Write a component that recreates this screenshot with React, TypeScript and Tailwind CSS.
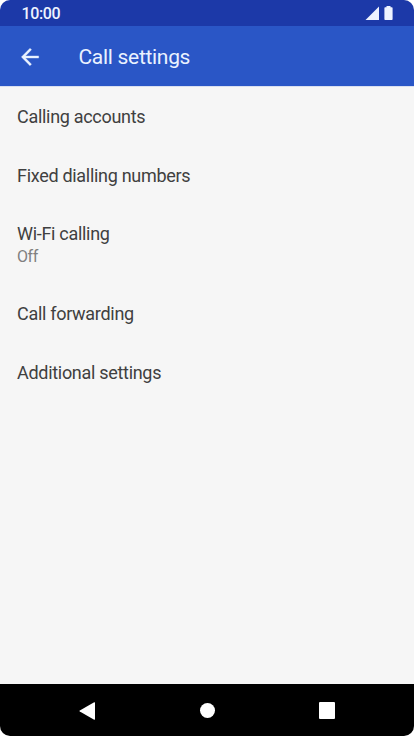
import React from 'react';

interface SettingItem {
  title: string;
  summary?: string;
}

const settings: SettingItem[] = [
  { title: 'Calling accounts' },
  { title: 'Fixed dialling numbers' },
  { title: 'Wi-Fi calling', summary: 'Off' },
  { title: 'Call forwarding' },
  { title: 'Additional settings' },
];

const StatusBar: React.FC = () => {
  return (
    <div className="h-[26px] shrink-0 bg-[#1c39a8] flex items-center justify-between pl-[21.5px] pr-[21.5px] text-[#eef3ff]">
      <span className="text-[16px] leading-[26px] font-medium tracking-[-0.35px] pt-px">10:00</span>
      <div className="flex items-center gap-[5px] pb-px">
        <svg width="14" height="14" viewBox="0 0 14 14" fill="currentColor">
          <path d="M14 .5v13.5H.5z" />
        </svg>
        <svg width="9" height="14" viewBox="0 0 9 14" fill="currentColor">
          <path d="M2.5 0h4v1.3h1.3q.8 0 .8.8v11.1q0 .8-.8.8H1.2q-.8 0-.8-.8V2.1q0-.8.8-.8h1.3z" />
        </svg>
      </div>
    </div>
  );
};

const AppBar: React.FC = () => {
  return (
    <header className="h-[60px] shrink-0 bg-[#2a56c6] flex items-center pl-[17px] text-[#eaf2ff]">
      <button className="w-[61.5px] pt-px" aria-label="Back">
        <svg className="block" width="26" height="26" viewBox="0 0 24 24" fill="currentColor" stroke="currentColor" strokeWidth="0.3">
          <path d="M20 11H7.83l5.59-5.59L12 4l-8 8 8 8 1.41-1.41L7.83 13H20v-2z" />
        </svg>
      </button>
      <h1 className="text-[21px] leading-6 tracking-[-0.3px] pt-0.5">Call settings</h1>
    </header>
  );
};

const SettingRow: React.FC<{ item: SettingItem }> = ({ item }) => {
  return (
    <li className={item.summary ? 'h-[80.3px] pt-[18px] pl-[17px]' : 'h-[58.6px] pt-[18px] pl-[17px]'}>
      <div className="text-[18px] leading-6 tracking-[-0.3px] text-[#404040]">{item.title}</div>
      {item.summary && (
        <div className="text-[16px] leading-[22px] tracking-[-0.4px] text-[#808080]">{item.summary}</div>
      )}
    </li>
  );
};

const NavBar: React.FC = () => {
  return (
    <nav className="h-[52px] shrink-0 bg-black text-white flex items-center justify-between pt-px pl-[79px] pr-[79px]">
      <svg width="17" height="18" viewBox="0 0 17 18" fill="currentColor">
        <path d="M15.2.3q.8-.4.8.6v16.2q0 1-.8.6L.8 9.6q-.8-.6 0-1.2z" />
      </svg>
      <div className="size-[15px] rounded-full bg-white" />
      <div className="size-[16.5px] rounded-[1px] bg-white" />
    </nav>
  );
};

const App: React.FC = () => {
  return (
    <div className="bg-white">
      <div className="w-[414px] h-[736px] rounded-[10px] overflow-hidden bg-[#f6f6f6] flex flex-col font-[Roboto,sans-serif]">
        <StatusBar />
        <AppBar />
        <main className="flex-1 border-t border-[#d9dff0]">
          <ul>
            {settings.map((item) => (
              <SettingRow key={item.title} item={item} />
            ))}
          </ul>
        </main>
        <NavBar />
      </div>
    </div>
  );
};

export default App;
